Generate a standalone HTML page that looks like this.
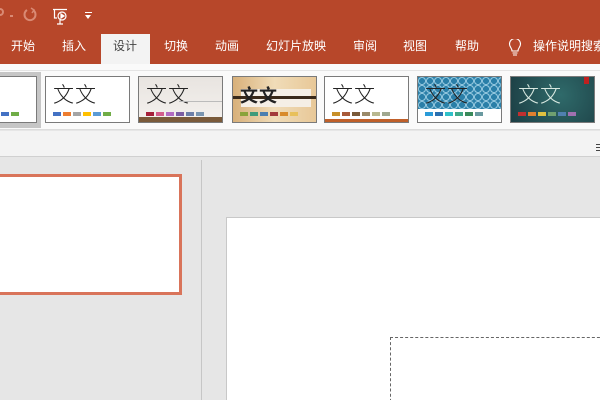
<!DOCTYPE html>
<html><head><meta charset="utf-8"><style>
*{margin:0;padding:0;box-sizing:border-box}
html,body{width:600px;height:400px;overflow:hidden}
body{position:relative;background:#e6e6e6;font-family:"Liberation Sans","Noto Sans CJK SC",sans-serif}
.a{position:absolute}
.tab{position:absolute;top:38px;font-size:12px;color:#fff;line-height:16px;white-space:nowrap}
.th{position:absolute;top:76px;width:85px;height:47px;border:1px solid #7a7a7a;background:#fff;overflow:hidden}
.th .t{position:absolute;left:7px;top:2px;font-size:21px;color:#222;font-family:"Noto Sans CJK SC",sans-serif;font-weight:300;letter-spacing:1px}
.sw{position:absolute;top:35px;left:7px;display:flex;gap:2px}
.sw i{display:block;width:8px;height:4px}
</style></head><body>
<div class="a" style="left:0;top:0;width:600px;height:64px;background:#b7472a"></div>
<div class="a" style="left:-4px;top:8px;width:8px;height:8px;border:2px solid #d98a74;border-radius:50%"></div>
<div class="a" style="left:10px;top:15px;width:3px;height:2px;background:#d98a74"></div>
<svg class="a" style="left:22px;top:7px" width="16" height="16" viewBox="0 0 16 16"><path d="M5 3 A5.5 5.5 0 1 0 11 3" fill="none" stroke="#d98a74" stroke-width="2"/><path d="M9 1 L12 3 L10 6" fill="none" stroke="#d98a74" stroke-width="1.5"/></svg>
<svg class="a" style="left:52px;top:8px" width="18" height="18" viewBox="0 0 18 18" fill="none" stroke="#fff" stroke-width="1.2"><path d="M1 1.5H15M2.5 1.5V10H5"/><circle cx="10" cy="8" r="4"/><path d="M9 6L12 8L9 10Z" fill="#fff"/><path d="M8 12V16M5 16H11"/></svg>
<div class="a" style="left:85px;top:12px;width:7px;height:1px;background:#fff"></div>
<div class="a" style="left:85px;top:15px;width:0;height:0;border-left:3.5px solid transparent;border-right:3.5px solid transparent;border-top:4px solid #fff"></div>
<div class="a" style="left:101px;top:34px;width:49px;height:31px;background:#f3f3f3"></div>
<div class="tab" style="left:11px">开始</div>
<div class="tab" style="left:62px">插入</div>
<div class="tab" style="left:113px;color:#444">设计</div>
<div class="tab" style="left:164px">切换</div>
<div class="tab" style="left:215px">动画</div>
<div class="tab" style="left:266px">幻灯片放映</div>
<div class="tab" style="left:353px">审阅</div>
<div class="tab" style="left:403px">视图</div>
<div class="tab" style="left:455px">帮助</div>
<svg class="a" style="left:508px;top:39px" width="14" height="18" viewBox="0 0 14 18" fill="none" stroke="#fff" stroke-width="1.1"><path d="M4 12C4 9 1.5 8 1.5 5A5.5 5.5 0 0 1 12.5 5C12.5 8 10 9 10 12Z"/><path d="M4.5 14H9.5M5 16H9"/></svg>
<div class="tab" style="left:533px">操作说明搜索</div>
<div class="a" style="left:0;top:64px;width:600px;height:66px;background:#fafafa;border-bottom:1px solid #dcdcdc"></div>
<div class="a" style="left:0;top:70px;width:600px;height:1px;background:#e4e4e4"></div>
<div class="a" style="left:0;top:72px;width:41px;height:56px;background:#c6c6c6"></div>
<div class="th" style="left:-50px;width:87px"><div class="sw" style="left:50px"><i style="background:#4472c4"></i><i style="background:#70ad47"></i></div></div>
<div class="th" style="left:45px"><div class="t">文文</div><div class="sw"><i style="background:#4472c4"></i><i style="background:#ed7d31"></i><i style="background:#a5a5a5"></i><i style="background:#ffc000"></i><i style="background:#5b9bd5"></i><i style="background:#70ad47"></i></div></div>
<div class="th" style="left:138px;background:linear-gradient(#e8e4e0,#f4f1ee)"><div class="t">文文</div><div class="a" style="left:40px;top:24px;width:44px;height:1px;background:#bbb"></div><div class="sw"><i style="background:#a5203a"></i><i style="background:#d35d8c"></i><i style="background:#b26bc2"></i><i style="background:#7b5ea3"></i><i style="background:#6c7fa8"></i><i style="background:#7a95b0"></i></div><div class="a" style="left:0;top:40px;width:85px;height:6px;background:#7a5a3a"></div></div>
<div class="th" style="left:232px;background:linear-gradient(90deg,#d8b07a,#f0dcb8,#e8c898)"><div class="a" style="left:8px;top:12px;width:70px;height:18px;background:#f5efe6"></div><div class="a" style="left:0;top:19px;width:85px;height:3px;background:#3a2a1a"></div><div class="t" style="font-size:18px;top:5px;font-weight:bold">文文</div><div class="sw"><i style="background:#8aa33a"></i><i style="background:#3f9b7a"></i><i style="background:#4a7fb0"></i><i style="background:#a33a3a"></i><i style="background:#d88a2a"></i><i style="background:#e8c05a"></i></div></div>
<div class="th" style="left:324px"><div class="t">文文</div><div class="sw"><i style="background:#c8902a"></i><i style="background:#a85a3a"></i><i style="background:#7a5a3a"></i><i style="background:#9a8a6a"></i><i style="background:#b8b890"></i><i style="background:#a0a890"></i></div><div class="a" style="left:0;top:42px;width:85px;height:4px;background:#c0602a"></div></div>
<div class="th" style="left:417px;background:repeating-radial-gradient(circle at 4px 4px,#2a7fa8 0 3px,#8fc4dc 3px 4px);background-size:8px 8px"><div class="a" style="left:0;top:32px;width:85px;height:15px;background:#fff"></div><div class="t">文文</div><div class="sw"><i style="background:#2a9bd8"></i><i style="background:#2a70b0"></i><i style="background:#30c0c8"></i><i style="background:#40a888"></i><i style="background:#3a8a5a"></i><i style="background:#6a9aa0"></i></div></div>
<div class="th" style="left:510px;background:radial-gradient(circle at 60% 40%,#2f6a6a,#1c3e44)"><div class="t" style="color:#d8e8e0">文文</div><div class="a" style="left:73px;top:0;width:5px;height:7px;background:#c02020"></div><div class="sw"><i style="background:#c03030"></i><i style="background:#e08030"></i><i style="background:#e0c040"></i><i style="background:#70a070"></i><i style="background:#5080b0"></i><i style="background:#a070b0"></i></div></div>
<div class="a" style="left:0;top:131px;width:600px;height:26px;background:#f3f3f3;border-bottom:1px solid #d0d0d0"></div>
<div class="a" style="left:596px;top:144px;width:6px;height:1px;background:#444;box-shadow:0 3px 0 #444,0 6px 0 #444"></div>
<div class="a" style="left:201px;top:160px;width:1px;height:240px;background:#c6c6c6"></div>
<div class="a" style="left:-4px;top:174px;width:186px;height:121px;border:3px solid #d9745a;background:#fff"></div>
<div class="a" style="left:226px;top:217px;width:380px;height:190px;background:#fff;border-left:1px solid #c8c8c8;border-top:1px solid #c8c8c8"></div>
<div class="a" style="left:390px;top:337px;width:220px;height:70px;border:1px dashed #666"></div>
</body></html>
